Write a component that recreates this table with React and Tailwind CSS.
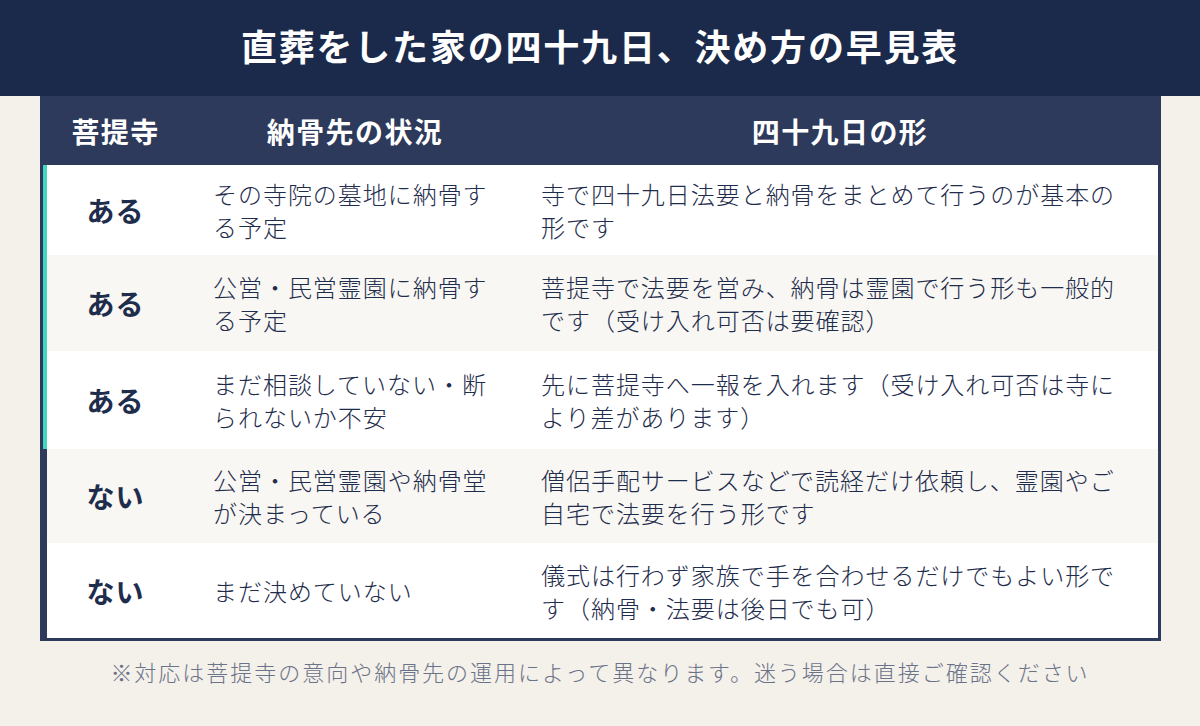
import React from "react";

const rows = [
  {
    k: "ある",
    teal: true,
    bg: "bg-white",
    h: "h-[90px]",
    a: "その寺院の墓地に納骨する予定",
    b: "寺で四十九日法要と納骨をまとめて行うのが基本の形です",
  },
  {
    k: "ある",
    teal: true,
    bg: "bg-[#f8f7f3]",
    h: "h-[96px]",
    a: "公営・民営霊園に納骨する予定",
    b: "菩提寺で法要を営み、納骨は霊園で行う形も一般的です（受け入れ可否は要確認）",
  },
  {
    k: "ある",
    teal: true,
    bg: "bg-white",
    h: "h-[98px]",
    a: "まだ相談していない・断られないか不安",
    b: "先に菩提寺へ一報を入れます（受け入れ可否は寺により差があります）",
  },
  {
    k: "ない",
    teal: false,
    bg: "bg-[#f8f7f3]",
    h: "h-[94px]",
    a: "公営・民営霊園や納骨堂が決まっている",
    b: "僧侶手配サービスなどで読経だけ依頼し、霊園やご自宅で法要を行う形です",
  },
  {
    k: "ない",
    teal: false,
    bg: "bg-white",
    h: "h-[95px]",
    a: "まだ決めていない",
    b: "儀式は行わず家族で手を合わせるだけでもよい形です（納骨・法要は後日でも可）",
  },
];

export default function App() {
  return (
    <div
      className="w-[1200px] h-[726px] bg-[#f4f0ea] flex flex-col"
      style={{ fontFamily: '"Noto Sans CJK JP", "Noto Sans", sans-serif' }}
    >
      <div className="h-[96px] bg-[#1b2a4b] flex items-center justify-center pb-[6px]">
        <h1 className="text-[36px] font-bold text-white tracking-[0.05em] leading-none">
          直葬をした家の四十九日、決め方の早見表
        </h1>
      </div>

      <div className="mx-[40px] w-[1121px] bg-[#2d3a5b] px-[3px] pb-[3px] flex flex-col">
        <div className="h-[69px] flex items-center text-white text-[28px] font-bold tracking-[0.05em]">
          <div className="w-[145px] text-center">菩提寺</div>
          <div className="w-[334px] text-center">納骨先の状況</div>
          <div className="flex-1 text-center">四十九日の形</div>
        </div>
        {rows.map((r, i) => (
          <div
            key={i}
            className={`${r.h} ${r.bg} flex items-center border-l-4 ${
              r.teal ? "border-[#41d7c1]" : "border-[#2d3a5b]"
            } text-[#1f2d4d]`}
          >
            <div className="w-[141px] pr-[4px] text-center text-[28px] font-bold tracking-[0.04em]">
              {r.k}
            </div>
            <div className="w-[334px] pl-[25px] pr-[19px] text-[24px] font-light leading-[33px] tracking-[0.04em]">
              {r.a}
            </div>
            <div className="flex-1 pl-[19px] pr-[24px] text-[24px] font-light leading-[33px] tracking-[0.04em]">
              {r.b}
            </div>
          </div>
        ))}
      </div>

      <div className="flex-1 flex items-center justify-center">
        <p className="text-[22px] font-light text-[#6b7388] tracking-[0.09em] leading-none -mt-[26px]">
          ※対応は菩提寺の意向や納骨先の運用によって異なります。迷う場合は直接ご確認ください
        </p>
      </div>
    </div>
  );
}
